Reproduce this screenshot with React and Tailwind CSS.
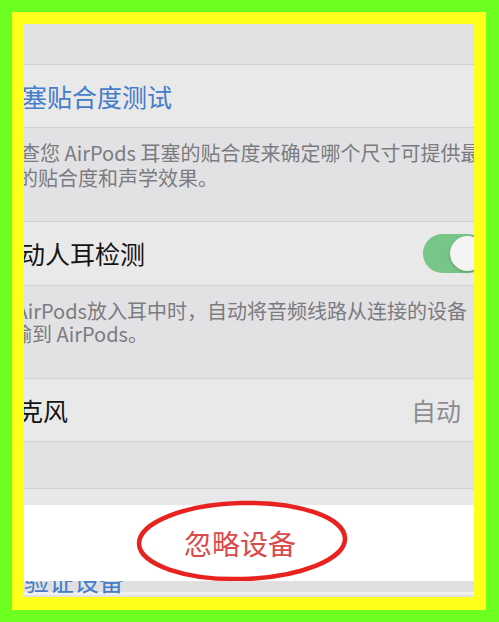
import React from "react";

const rowBg = "bg-[#e9e9ea]";
const groupBg = "bg-[#e2e2e4]";
const divider = "h-px bg-[#d2d2d5]";

function TitleRow({ text, offset, children }) {
  return (
    <div className={`flex h-[62px] items-center justify-between overflow-hidden ${rowBg}`}>
      <span className={`whitespace-nowrap text-[25px] leading-none text-[#141414] ${offset}`}>
        {text}
      </span>
      {children}
    </div>
  );
}

function Toggle() {
  return (
    <div className="-mr-[13px] flex h-[39px] w-[64px] shrink-0 items-center justify-end rounded-full bg-[#78c588] pr-[2px]">
      <div className="h-[35px] w-[35px] rounded-full bg-[#f4f4f4] shadow-[0_1px_3px_rgba(0,0,0,0.25)]" />
    </div>
  );
}

export default function App() {
  return (
    <div className="h-[622px] w-[499px] bg-[#6dff20] pb-[12px] pl-[12px] pr-[13px] pt-[12px] font-['Noto_Sans_CJK_SC','Noto_Sans',sans-serif]">
      <div className="h-full w-full bg-[#ffff1c] pb-[13px] pl-[12px] pr-[12px] pt-[12px]">
        <div className="flex h-[573px] w-[450px] flex-col overflow-hidden bg-[#e2e2e4]">
          {/* top grouped spacer */}
          <div className={`h-[40px] ${groupBg}`} />
          <div className={divider} />

          {/* fit test link */}
          <div className={`flex h-[62px] items-center overflow-hidden ${rowBg}`}>
            <span className="-ml-[27px] whitespace-nowrap text-[25px] leading-none text-[#437cc9]">
              耳塞贴合度测试
            </span>
          </div>
          <div className={divider} />
          <div className={`h-[93px] overflow-hidden pt-[12px] text-[20px] leading-[25px] text-[#7b7b80] ${groupBg}`}>
            <div className="-ml-[24px] whitespace-nowrap">检查您 AirPods 耳塞的贴合度来确定哪个尺寸可提供最</div>
            <div className="-ml-[26px] whitespace-nowrap">佳的贴合度和声学效果。</div>
          </div>
          <div className={divider} />

          {/* automatic ear detection */}
          <div className={`flex h-[63px] items-center justify-between overflow-hidden ${rowBg}`}>
            <span className="-ml-[29px] whitespace-nowrap text-[25px] leading-none text-[#141414]">
              自动人耳检测
            </span>
            <Toggle />
          </div>
          <div className={divider} />
          <div className={`h-[92px] overflow-hidden pt-[13px] text-[20px] leading-[23px] text-[#7b7b80] ${groupBg}`}>
            <div className="-ml-[33px] whitespace-nowrap">当 AirPods放入耳中时，自动将音频线路从连接的设备</div>
            <div className="-ml-[32px] whitespace-nowrap">传输到 AirPods。</div>
          </div>
          <div className={divider} />

          {/* microphone */}
          <TitleRow text="麦克风" offset="-ml-[31px]">
            <span className="pr-[13px] text-[25px] leading-none text-[#8d8d92]">自动</span>
          </TitleRow>
          <div className={divider} />

          <div className={`h-[46px] ${groupBg}`} />
          <div className={divider} />
          <div className="h-[16px] bg-[#e8e8ea]" />

          {/* forget device */}
          <div className="relative flex h-[76px] items-center justify-center bg-white pr-[18px]">
            <span className="text-[28px] leading-none text-[#d94b4b]">忽略设备</span>
            <svg
              className="pointer-events-none absolute left-[112px] top-[-5px] overflow-visible"
              width="212"
              height="82"
              viewBox="0 0 212 82"
            >
              <ellipse
                cx="106"
                cy="41"
                rx="103"
                ry="38"
                fill="none"
                stroke="#e8231f"
                strokeWidth="4.5"
                transform="rotate(-1.5 106 41)"
              />
            </svg>
          </div>

          {/* next section, cut off */}
          <div className="relative h-[14px] overflow-hidden bg-[#f0f0f0]">
            <div className="h-[11px] bg-[#e0e0e2]" />
            <span className="absolute left-0 top-[-13px] whitespace-nowrap text-[25px] leading-[25px] text-[#437cc9]">
              验证设备
            </span>
          </div>
        </div>
      </div>
    </div>
  );
}
